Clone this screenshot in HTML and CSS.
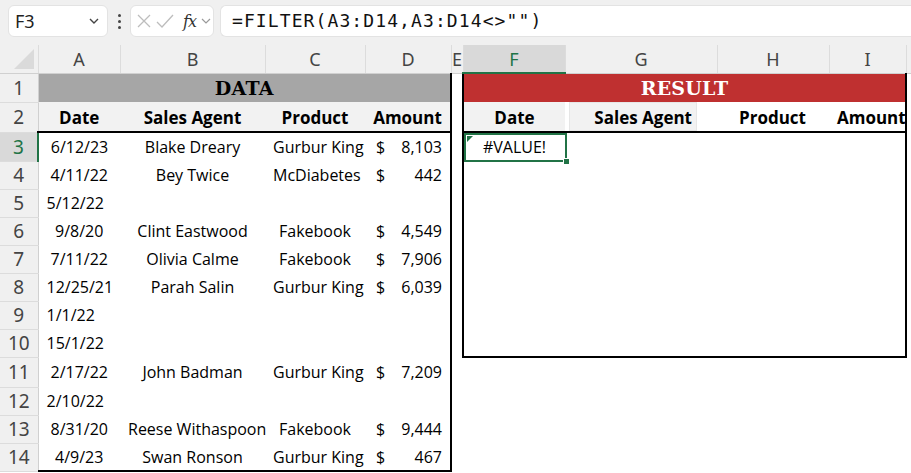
FILE: index.html
```html
<!DOCTYPE html>
<html lang="en">
<head>
<meta charset="utf-8">
<title>Sheet1</title>
<link rel="stylesheet" href="styles.css">
</head>
<body>
<div class="toolbar">
  <div class="namebox">
    <span class="ref">F3</span>
    <svg class="chev" width="12" height="8" viewBox="0 0 12 8"><path d="M2 2l4 4 4-4" fill="none" stroke="#444" stroke-width="1.4"/></svg>
  </div>
  <div class="dots"><span></span><span></span><span></span></div>
  <div class="fxbox">
    <svg width="18" height="18" viewBox="0 0 18 18"><path d="M3 3l12 12M15 3L3 15" stroke="#bdbdbd" stroke-width="1.3" fill="none"/></svg>
    <svg width="20" height="18" viewBox="0 0 20 18"><path d="M2 10l5 5L18 3" stroke="#bdbdbd" stroke-width="1.3" fill="none"/></svg>
    <span class="fx">fx</span>
    <svg width="10" height="8" viewBox="0 0 10 8"><path d="M1 2l4 4 4-4" fill="none" stroke="#9a9a9a" stroke-width="1.2"/></svg>
  </div>
  <div class="formula">=FILTER(A3:D14,A3:D14&lt;&gt;"")</div>
</div>

<table class="sheet">
  <colgroup>
    <col class="w-rh"><col class="w-a"><col class="w-b"><col class="w-c"><col class="w-d">
    <col class="w-e"><col class="w-f"><col class="w-g"><col class="w-h"><col class="w-i"><col class="w-j">
  </colgroup>
  <thead>
    <tr class="hdr">
      <th class="corner"><span class="tri"></span></th>
      <th>A</th><th>B</th><th>C</th><th>D</th><th>E</th>
      <th class="active">F</th><th>G</th><th>H</th><th>I</th><th></th>
    </tr>
  </thead>
  <tbody>
    <tr class="r1">
      <th class="rh">1</th>
      <td colspan="4" class="title data-title bR">DATA</td>
      <td></td>
      <td colspan="4" class="title result-title bL bR">RESULT</td>
      <td></td>
    </tr>
    <tr class="r2">
      <th class="rh">2</th>
      <td class="h c shade bB">Date</td>
      <td class="h c shade bB">Sales Agent</td>
      <td class="h c shade bB">Product</td>
      <td class="h c shade bB bR">Amount</td>
      <td></td>
      <td class="h c shade bB bL">Date</td>
      <td class="h bB flush"><div class="boxed">Sales Agent</div></td>
      <td class="h r bB pad-h">Product</td>
      <td class="h r bB bR pad-i">Amount</td>
      <td></td>
    </tr>
    <tr class="r3">
      <th class="rh active">3</th>
      <td class="c">6/12/23</td><td class="c">Blake Dreary</td><td class="c">Gurbur King</td>
      <td class="bR"><div class="acct"><span>$</span><span>8,103</span></div></td>
      <td></td>
      <td class="c bL cur-cell">#VALUE!<span class="sel"><span class="err"></span><span class="handle"></span></span></td>
      <td></td><td></td><td class="bR"></td><td></td>
    </tr>
    <tr>
      <th class="rh">4</th>
      <td class="c">4/11/22</td><td class="c">Bey Twice</td><td class="c">McDiabetes</td>
      <td class="bR"><div class="acct"><span>$</span><span>442</span></div></td>
      <td></td><td class="bL"></td><td></td><td></td><td class="bR"></td><td></td>
    </tr>
    <tr>
      <th class="rh">5</th>
      <td class="l">5/12/22</td><td></td><td></td><td class="bR"></td>
      <td></td><td class="bL"></td><td></td><td></td><td class="bR"></td><td></td>
    </tr>
    <tr>
      <th class="rh">6</th>
      <td class="c">9/8/20</td><td class="c">Clint Eastwood</td><td class="c">Fakebook</td>
      <td class="bR"><div class="acct"><span>$</span><span>4,549</span></div></td>
      <td></td><td class="bL"></td><td></td><td></td><td class="bR"></td><td></td>
    </tr>
    <tr>
      <th class="rh">7</th>
      <td class="c">7/11/22</td><td class="c">Olivia Calme</td><td class="c">Fakebook</td>
      <td class="bR"><div class="acct"><span>$</span><span>7,906</span></div></td>
      <td></td><td class="bL"></td><td></td><td></td><td class="bR"></td><td></td>
    </tr>
    <tr>
      <th class="rh">8</th>
      <td class="c">12/25/21</td><td class="c">Parah Salin</td><td class="c">Gurbur King</td>
      <td class="bR"><div class="acct"><span>$</span><span>6,039</span></div></td>
      <td></td><td class="bL"></td><td></td><td></td><td class="bR"></td><td></td>
    </tr>
    <tr>
      <th class="rh">9</th>
      <td class="l">1/1/22</td><td></td><td></td><td class="bR"></td>
      <td></td><td class="bL"></td><td></td><td></td><td class="bR"></td><td></td>
    </tr>
    <tr>
      <th class="rh">10</th>
      <td class="l">15/1/22</td><td></td><td></td><td class="bR"></td>
      <td></td><td class="bL bB"></td><td class="bB"></td><td class="bB"></td><td class="bR bB"></td><td></td>
    </tr>
    <tr class="r11">
      <th class="rh">11</th>
      <td class="c">2/17/22</td><td class="c">John Badman</td><td class="c">Gurbur King</td>
      <td class="bR"><div class="acct"><span>$</span><span>7,209</span></div></td>
      <td></td><td></td><td></td><td></td><td></td><td></td>
    </tr>
    <tr>
      <th class="rh">12</th>
      <td class="l">2/10/22</td><td></td><td></td><td class="bR"></td>
      <td></td><td></td><td></td><td></td><td></td><td></td>
    </tr>
    <tr>
      <th class="rh">13</th>
      <td class="c">8/31/20</td><td class="c">Reese Withaspoon</td><td class="c">Fakebook</td>
      <td class="bR"><div class="acct"><span>$</span><span>9,444</span></div></td>
      <td></td><td></td><td></td><td></td><td></td><td></td>
    </tr>
    <tr>
      <th class="rh">14</th>
      <td class="c bB">4/9/23</td><td class="c bB">Swan Ronson</td><td class="c bB">Gurbur King</td>
      <td class="bR bB"><div class="acct"><span>$</span><span>467</span></div></td>
      <td></td><td></td><td></td><td></td><td></td><td></td>
    </tr>
  </tbody>
</table>
</body>
</html>
```

FILE: styles.css
```css
* { box-sizing: border-box; }

body {
  margin: 0;
  background: #ffffff;
  font-family: "Open Sans", "Noto Sans", sans-serif;
  color: #000;
  overflow: hidden;
}

/* ---------- formula bar ---------- */
.toolbar {
  height: 45px;
  background: #f0f0f0;
  display: flex;
  align-items: flex-start;
  padding-top: 5px;
}

.namebox {
  margin-left: 8px;
  width: 100px;
  height: 32px;
  background: #fff;
  border: 1px solid #e3e3e3;
  border-radius: 6px;
  display: flex;
  align-items: center;
  justify-content: space-between;
  padding: 0 7px 0 6px;
}
.namebox .ref {
  font-family: "Noto Sans", sans-serif;
  font-size: 18px;
  color: #222;
}

.dots {
  width: 22px;
  height: 32px;
  display: flex;
  flex-direction: column;
  align-items: center;
  justify-content: center;
  gap: 3px;
}
.dots span {
  width: 3px;
  height: 3px;
  background: #444;
  border-radius: 50%;
}

.fxbox {
  width: 84px;
  height: 32px;
  background: #fff;
  border: 1px solid #e3e3e3;
  border-radius: 6px;
  display: flex;
  align-items: center;
  padding-left: 4px;
  gap: 2px;
}
.fxbox .fx {
  font-family: "DejaVu Serif", serif;
  font-style: italic;
  font-size: 16px;
  color: #333;
  letter-spacing: -1px;
  margin-left: 6px;
  margin-right: 3px;
}

.formula {
  margin-left: 6px;
  flex: 1;
  height: 32px;
  background: #fff;
  border: 1px solid #e3e3e3;
  border-right: none;
  border-radius: 6px 0 0 6px;
  font-family: "DejaVu Sans Mono", monospace;
  font-size: 18px;
  letter-spacing: 1.1px;
  line-height: 30px;
  padding-left: 11px;
  color: #111;
}

/* ---------- grid ---------- */
.sheet {
  border-collapse: collapse;
  table-layout: fixed;
  width: 911px;
}
.w-rh { width: 38px; }
.w-a { width: 82px; }
.w-b { width: 145px; }
.w-c { width: 100px; }
.w-d { width: 86px; }
.w-e { width: 12px; }
.w-f { width: 102px; }
.w-g { width: 152px; }
.w-h { width: 112px; }
.w-i { width: 77px; }
.w-j { width: 5px; }

.hdr th {
  height: 28px;
  background: #f0f0f0;
  border-left: 1px solid #dcdcdc;
  border-bottom: 1px solid #d0d0d0;
  font-family: "Noto Sans", sans-serif;
  font-weight: normal;
  font-size: 18px;
  color: #444;
  padding: 0;
  overflow: hidden;
}
.hdr th.corner {
  border-left: none;
  position: relative;
}
.corner .tri {
  position: absolute;
  right: 4px;
  bottom: 4px;
  width: 0;
  height: 0;
  border-left: 20px solid transparent;
  border-bottom: 20px solid #dadada;
}
.hdr th.active {
  background: #d9d9d9;
  color: #217346;
  border-bottom: 2px solid #217346;
}

.rh {
  background: #f0f0f0;
  border-right: 1px solid #d0d0d0;
  border-bottom: 1px solid #dcdcdc;
  font-family: "Noto Sans", sans-serif;
  font-weight: normal;
  font-size: 19px;
  color: #444;
  padding: 0;
  text-align: center;
}
.rh.active {
  background: #d9d9d9;
  color: #217346;
  border-right: 2px solid #217346;
}

tbody tr { height: 28px; }
tbody tr.r1, tbody tr.r2 { height: 29px; }
tbody tr.r3 { height: 29px; }
tbody tr.r11 { height: 30px; }

td {
  padding: 0 8px;
  font-size: 16px;
  white-space: nowrap;
  overflow: visible;
  line-height: 20px;
}

.c { text-align: center; }
.l { text-align: left; }
.r { text-align: right; }

.h {
  font-weight: bold;
  font-size: 17px;
  padding-top: 3px;
}
.shade { background: #f2f2f2; }

.flush { padding: 0; }
.boxed {
  margin: 0 20px 0 4px;
  height: 29px;
  padding: 6px 5px 0 0;
  text-align: right;
  background: #f2f2f2;
  box-shadow: inset 0 0 0 1px #e6e6e6;
}
.pad-h { padding-right: 23px; }
.pad-i { padding-right: 4px; }

.title {
  font-family: "DejaVu Serif", serif;
  font-weight: bold;
  font-size: 19px;
  text-align: center;
  letter-spacing: 0.2px;
}
.data-title { background: #a6a6a6; color: #000; }
.result-title { background: #bf3030; color: #fff; }

.bR { border-right: 2px solid #000; }
.bL { border-left: 2px solid #000; }
.bB { border-bottom: 2px solid #000; }

.acct {
  display: flex;
  justify-content: space-between;
  padding-left: 3px;
  padding-right: 0;
}

/* active cell */
.cur-cell { position: relative; }
.sel {
  position: absolute;
  left: 0;
  top: 0;
  right: -2px;
  bottom: -1px;
  border: 2px solid #217346;
}
.sel .err {
  position: absolute;
  left: 1px;
  top: 1px;
  width: 0;
  height: 0;
  border-top: 6px solid #217346;
  border-right: 6px solid transparent;
}
.sel .handle {
  position: absolute;
  right: -5px;
  bottom: -5px;
  width: 7px;
  height: 7px;
  background: #217346;
  border: 1px solid #fff;
}
```
